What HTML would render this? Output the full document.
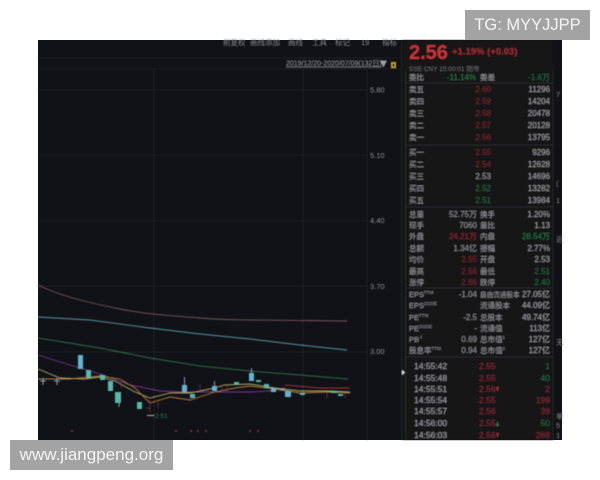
<!DOCTYPE html>
<html><head><meta charset="utf-8">
<style>
html,body{margin:0;padding:0;background:#fff;width:600px;height:480px;overflow:hidden}
svg{display:block;position:absolute;left:0;top:0}
text{font-family:"Liberation Sans","Noto Sans CJK SC",sans-serif}
.wm{position:absolute;background:#a3a3a3;color:#f4f4f4;font-family:"Liberation Sans",sans-serif;white-space:nowrap}
</style></head><body>
<svg width="600" height="480" viewBox="0 0 600 480">
<defs><filter id="b" x="-2%" y="-2%" width="104%" height="104%"><feGaussianBlur stdDeviation="0.6"/></filter></defs>
<rect x="38" y="40" width="524" height="400" fill="#111217"/>
<g filter="url(#b)">
<rect x="403" y="40" width="150" height="400" fill="#131419"/>
<g stroke="#202228" stroke-width="1" fill="none">
<path d="M38 58H400M38 69H400M38 90H367M38 155H367M38 221H367M38 286H367M38 352H367"/>
<path d="M154 69V440M303 69V440M367 69V440"/>
</g>
<path d="M401.500 40V440M405.500 70V440M553 70V440" stroke="#24262c" fill="none"/>
<path d="M405 83H553M405 145H553M405 207H553M405 288H553M405 357H553" stroke="#2a2c32" fill="none"/>
<!-- top toolbar -->
<g font-size="7.500" fill="#8c8c90">
<text x="223" y="45">前复权</text><text x="250" y="45">画线添加</text><text x="288" y="45">画线</text><text x="312" y="45">工具</text><text x="335" y="45">标记</text><text x="361" y="45">19</text><text x="382" y="45">指标</text>
</g>
<text x="286" y="65.500" font-size="7" fill="#a8a8ac" text-decoration="underline">2019/12/20-2020/07/09(132日)</text>
<path d="M380 60.500h7l-3.500 7z" fill="#a0a0a0"/>
<rect x="391" y="62" width="5" height="6" fill="#c9a82e"/>
<rect x="392.500" y="63.500" width="2" height="3" fill="#131419"/>
<!-- y axis -->
<g font-size="7.500" fill="#909094">
<text x="370" y="92.500">5.80</text><text x="370" y="158">5.10</text><text x="370" y="223">4.40</text><text x="370" y="289">3.70</text><text x="370" y="354">3.00</text>
</g>
<!-- MA lines -->
<g fill="none" stroke-width="0.900">
<path d="M38 285C60 296 90 303 120 309S180 316 200 318S250 320 347 321" stroke="#76555f"/>
<path d="M38 317L90 320L150 328L200 334L250 339L300 345L347 350" stroke="#5295a0"/>
<path d="M38 338L100 348L150 358L200 366L250 371L300 375L348 379" stroke="#2a6e42"/>
<path d="M38 355L70 365L100 374L130 385L160 391L185 392L220 392L250 392L270 391L285 388" stroke="#7c3490"/>
<path d="M285 385L320 388L350 388" stroke="#983038"/>
<path d="M38 369L60 378L85 379L100 377L115 381L135 392L150 398L170 393L190 393L210 389L225 385L250 384L275 388L300 391L330 391L350 392" stroke="#b0aa64"/>
<path d="M38 379L70 379L100 376L120 379L135 388L150 403L170 397L190 400L215 392L235 388L250 386L275 389L300 393L330 392L350 393" stroke="#b87a34"/>
</g>
<!-- candles -->
<g fill="#62b6d2">
<rect x="78" y="355" width="5" height="14"/><rect x="182" y="385" width="5" height="7"/><rect x="249" y="373" width="5" height="8"/>
<rect x="271" y="388" width="5" height="4"/><rect x="285" y="391" width="6" height="6"/><rect x="212" y="386" width="5" height="5"/>
</g>
<g fill="#56b8a8">
<rect x="86" y="370" width="5" height="8"/><rect x="100" y="375" width="5" height="5"/><rect x="108" y="381" width="5" height="10"/>
<rect x="115" y="392" width="6" height="11"/><rect x="137" y="402" width="5" height="7"/><rect x="190" y="394" width="5" height="4"/>
<rect x="234" y="382" width="5" height="3"/><rect x="256" y="380" width="5" height="2"/><rect x="264" y="384" width="5" height="4"/>
<rect x="300" y="393" width="5" height="2"/><rect x="331" y="391" width="6" height="2"/><rect x="338" y="394" width="5" height="2"/>
</g>
<path d="M184.500 377V385M214.500 381V386M251.500 368V373M43 378V385M40 381H46M57 378V385M54 381H60M280 390H284M119 403V407" stroke="#7fa8b8" fill="none"/>
<path d="M121 379V388M150 400V412M146 408H150M158 402V408M200 384V392M222 384V392M227 384V392M327 393V398M345 394V398" stroke="#662a30" fill="none"/>
<path d="M147 415.500H154" stroke="#b0b0b0"/>
<text x="155" y="418" font-size="6.500" fill="#327a58">2.51</text>
<g fill="#8e3442">
<circle cx="72" cy="431" r="1"/><circle cx="176" cy="431" r="1"/><circle cx="191" cy="431" r="1"/><circle cx="198" cy="431" r="1"/><circle cx="206" cy="431" r="1"/><circle cx="250" cy="431" r="1"/><circle cx="258" cy="431" r="1"/>
</g>
<path d="M402 370l3 2.500-3 2.500z" fill="#e0e0e0"/>
<!-- quote header -->
<text x="409" y="59" font-size="20" font-weight="bold" fill="#c83638">2.56</text>
<text x="452" y="54.500" font-size="9.500" font-weight="bold" fill="#a02e34">+1.19% (+0.03)</text>
<text x="409" y="71" font-size="6.500" fill="#66666a">SSE  CNY  15:00:01  閉市</text>
<!-- labels -->
<g font-size="7.500" fill="#9a9a9e">
<text x="409" y="80">委比</text><text x="409" y="92">卖五</text><text x="409" y="104">卖四</text><text x="409" y="116">卖三</text><text x="409" y="128">卖二</text><text x="409" y="140">卖一</text>
<text x="409" y="155">买一</text><text x="409" y="167">买二</text><text x="409" y="179">买三</text><text x="409" y="191">买四</text><text x="409" y="203">买五</text>
<text x="409" y="217">总量</text><text x="409" y="228">现手</text><text x="409" y="239">外盘</text><text x="409" y="251">总额</text><text x="409" y="262">均价</text><text x="409" y="274">最高</text><text x="409" y="285">涨停</text>
<text x="409" y="297">EPS<tspan font-size="4.500" dy="-3">TTM</tspan></text><text x="409" y="308">EPS<tspan font-size="4.500" dy="-3">2020E</tspan></text><text x="409" y="320">PE<tspan font-size="4.500" dy="-3">TTM</tspan></text><text x="409" y="331">PE<tspan font-size="4.500" dy="-3">2020E</tspan></text><text x="409" y="342">PB<tspan font-size="4.500" dy="-3">·f</tspan></text><text x="409" y="353">股息率<tspan font-size="4.500" dy="-3">TTM</tspan></text>
<text x="480" y="80">委差</text>
<text x="480" y="217">换手</text><text x="480" y="228">量比</text><text x="480" y="239">内盘</text><text x="480" y="251">振幅</text><text x="480" y="262">开盘</text><text x="480" y="274">最低</text><text x="480" y="285">跌停</text>
<text x="480" y="297" font-size="6.600">自由流通股本</text><text x="480" y="308">流通股本</text><text x="480" y="320">总股本</text><text x="480" y="331">流通值</text><text x="480" y="342">总市值<tspan font-size="4.500" dy="-3">1</tspan></text><text x="480" y="353">总市值<tspan font-size="4.500" dy="-3">2</tspan></text>
</g>
<!-- middle values -->
<g font-size="8" text-anchor="end">
<text x="476" y="80" fill="#287a4c">-11.14%</text>
<g fill="#7e2836"><text x="491" y="92">2.60</text><text x="491" y="104">2.59</text><text x="491" y="116">2.58</text><text x="491" y="128">2.57</text><text x="491" y="140">2.56</text><text x="491" y="155">2.55</text><text x="491" y="167">2.54</text></g>
<text x="491" y="179" fill="#9a9a9e">2.53</text>
<g fill="#286c44"><text x="491" y="191">2.52</text><text x="491" y="203">2.51</text></g>
<text x="477" y="217" fill="#909094">52.75万</text><text x="477" y="228" fill="#909094">7060</text><text x="477" y="239" fill="#8e2c3a">24.21万</text><text x="477" y="251" fill="#909094">1.34亿</text>
<g fill="#7e2836"><text x="477" y="262">2.55</text><text x="477" y="274">2.56</text><text x="477" y="285">2.66</text></g>
<g fill="#909094"><text x="477" y="297">-1.04</text><text x="477" y="320">-2.5</text><text x="477" y="331">-</text><text x="477" y="342">0.69</text><text x="477" y="353">0.94</text></g>
</g>
<!-- right values -->
<g font-size="8" text-anchor="end" fill="#a0a0a4">
<text x="550" y="80" fill="#286c44">-1.6万</text>
<text x="550" y="92">11296</text><text x="550" y="104">14204</text><text x="550" y="116">20478</text><text x="550" y="128">20128</text><text x="550" y="140">13795</text>
<text x="550" y="155">9296</text><text x="550" y="167">12628</text><text x="550" y="179">14696</text><text x="550" y="191">13282</text><text x="550" y="203">13984</text>
<text x="550" y="217">1.20%</text><text x="550" y="228">1.13</text><text x="550" y="239" fill="#287a4c">28.54万</text><text x="550" y="251">2.77%</text><text x="550" y="262">2.53</text><text x="550" y="274" fill="#286c44">2.51</text><text x="550" y="285" fill="#286c44">2.40</text>
<text x="550" y="297">27.05亿</text><text x="550" y="308">44.09亿</text><text x="550" y="320">49.74亿</text><text x="550" y="331">113亿</text><text x="550" y="342">127亿</text><text x="550" y="353">127亿</text>
</g>
<!-- ticks -->
<g font-size="8.500" fill="#a0a0a4">
<text x="414" y="369">14:55:42</text><text x="414" y="381">14:55:48</text><text x="414" y="392">14:55:51</text><text x="414" y="403">14:55:54</text><text x="414" y="414">14:55:57</text><text x="414" y="426">14:56:00</text><text x="414" y="438">14:56:03</text>
</g>
<g font-size="8.500" fill="#8e2c3a">
<text x="479" y="369">2.55</text><text x="479" y="381">2.55</text><text x="479" y="392">2.56</text><text x="479" y="403">2.55</text><text x="479" y="414">2.56</text><text x="479" y="426">2.55</text><text x="479" y="438">2.56</text>
</g>
<path d="M496 387l1.500 5 1.500-5zM496 433l1.500 5 1.500-5z" fill="#a02e3c"/>
<path d="M496 426l1.500-5 1.500 5z" fill="#287a4c"/>
<g font-size="8.500" text-anchor="end">
<text x="550" y="369" fill="#286c44">1</text><text x="550" y="381" fill="#286c44">40</text><text x="550" y="392" fill="#8e2c3a">2</text><text x="550" y="403" fill="#8e2c3a">199</text><text x="550" y="414" fill="#8e2c3a">39</text><text x="550" y="426" fill="#286c44">50</text><text x="550" y="438" fill="#8e2c3a">269</text>
</g>
<!-- right strip fragments -->
<g font-size="7.500" fill="#88888e">
<text x="556" y="97">7</text><text x="556" y="186">(</text><text x="556" y="203">1</text><text x="556" y="242">近</text><text x="556" y="345">无</text><text x="556" y="419">单</text><text x="556" y="428">5</text><text x="556" y="438">1</text>
</g>
</g>
</svg>
<div class="wm" style="left:465px;top:10px;width:125px;height:30px;line-height:30px;font-size:16.500px;text-align:center">TG: MYYJJPP</div>
<div class="wm" style="left:10px;top:440px;width:163px;height:30px;line-height:30px;font-size:17px;text-align:center">www.jiangpeng.org</div>
</body></html>
